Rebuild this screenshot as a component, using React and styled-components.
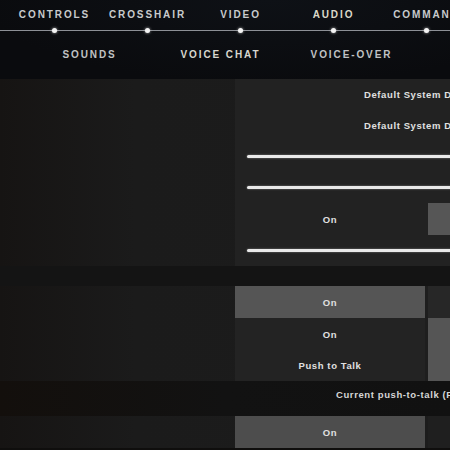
import React from "react";
import styled, { createGlobalStyle } from "styled-components";

const Global = createGlobalStyle`
  html, body { margin: 0; padding: 0; }
  body {
    background: #0c0e12;
    font-family: "Liberation Sans", Arial, sans-serif;
    overflow: hidden;
  }
`;

const Screen = styled.div`
  width: 450px;
  height: 450px;
  overflow: hidden;
  display: flex;
  flex-direction: column;
  background: #0f0e0d;
`;

/* ---------- header tabs ---------- */
const Header = styled.header`
  height: 79px;
  flex: none;
  background: radial-gradient(ellipse at 60% 0%, #0e1116 0%, #0a0b0e 75%);
  display: flex;
  flex-direction: column;
`;

const TabRow = styled.nav`
  position: relative;
  display: flex;
  padding-left: 8px;
  height: 40px;
  &::after {
    content: "";
    position: absolute;
    left: 0;
    right: 0;
    top: 30px;
    height: 1px;
    background: #8d9096;
  }
`;

const Tab = styled.div`
  position: relative;
  flex: none;
  width: 93px;
  display: flex;
  justify-content: center;
  white-space: nowrap;
  padding-top: 10px;
  font-size: 10px;
  font-weight: 700;
  letter-spacing: 1.9px;
  line-height: 10px;
  color: ${(p) => (p.$active ? "#dbd8c8" : "#c8cacc")};
  &::after {
    content: "";
    position: absolute;
    z-index: 1;
    left: 50%;
    top: 28px;
    width: 5px;
    height: 5px;
    margin-left: -2.5px;
    border-radius: 50%;
    background: #f4f4f4;
    box-shadow: 0 0 3px rgba(255, 255, 255, 0.7);
  }
`;

const SubRow = styled.nav`
  display: flex;
  padding-left: 24px;
  padding-top: 10px;
`;

const SubTab = styled.div`
  flex: none;
  width: 131px;
  text-align: center;
  white-space: nowrap;
  font-size: 10px;
  font-weight: 700;
  letter-spacing: 1.9px;
  line-height: 10px;
  color: ${(p) => (p.$active ? "#d8d7ce" : "#c0c2c4")};
`;

/* ---------- settings body ---------- */
const Section = styled.section`
  flex: none;
  display: grid;
  grid-template-columns: 235px 1fr;
  background: linear-gradient(90deg, #161413 0%, #1b1b1b 30%, #1c1c1c 100%);
`;

const LeftPad = styled.div``;

const Panel = styled.div`
  display: flex;
  flex-direction: column;
  background: ${(p) => p.$bg || "transparent"};
`;

const Row = styled.div`
  height: ${(p) => p.$h || 31}px;
  flex: none;
  display: flex;
  align-items: center;
  overflow: hidden;
`;

const Label = styled.span`
  font-size: 9.5px;
  font-weight: 700;
  letter-spacing: 0.6px;
  color: #e0e0e0;
  white-space: nowrap;
`;

const DropText = styled(Label)`
  padding-left: 129px;
`;

const Track = styled.div`
  position: relative;
  margin-left: 12px;
  flex: 1;
  height: 3px;
  border-radius: 2px 0 0 2px;
  background: #e9e9e9;
  box-shadow: 0 0 2px rgba(255, 255, 255, 0.45);
`;

const Knob = styled.span`
  position: absolute;
  top: 50%;
  width: 7px;
  height: 7px;
  margin: -3.5px 0 0 -3.5px;
  border-radius: 50%;
  background: #fafafa;
  box-shadow: 0 0 3px rgba(255, 255, 255, 0.8);
`;

const Choice = styled.div`
  flex: none;
  width: ${(p) => p.$w || 190}px;
  height: 100%;
  display: flex;
  align-items: center;
  justify-content: center;
  background: ${(p) => p.$bg || "transparent"};
`;

const ChoiceGap = styled.div`
  flex: none;
  width: 3px;
  height: 100%;
  background: ${(p) => p.$bg || "transparent"};
`;

const Band = styled.div`
  flex: none;
  height: ${(p) => p.$h}px;
  background: ${(p) => p.$bg};
  display: flex;
  align-items: flex-start;
`;

const InfoText = styled(Label)`
  padding-left: 336px;
  padding-top: 8px;
  color: #d6d6d6;
`;

const Slider = ({ value }) => (
  <Row>
    <Track>{value != null && <Knob style={{ left: `${value}%` }} />}</Track>
  </Row>
);

const ToggleRow = ({ h, on, off, label = "On", panel }) => (
  <Row $h={h}>
    <Choice $bg={on}>
      <Label>{label}</Label>
    </Choice>
    <ChoiceGap $bg={panel} />
    <Choice $bg={off} />
  </Row>
);

export default function App() {
  const tabs = ["CONTROLS", "CROSSHAIR", "VIDEO", "AUDIO", "COMMAND"];
  const subs = ["SOUNDS", "VOICE CHAT", "VOICE-OVER"];
  return (
    <Screen>
      <Global />
      <Header>
        <TabRow>
          {tabs.map((t) => (
            <Tab key={t} $active={t === "AUDIO"}>
              {t}
            </Tab>
          ))}
        </TabRow>
        <SubRow>
          {subs.map((s) => (
            <SubTab key={s} $active={s === "VOICE CHAT"}>
              {s}
            </SubTab>
          ))}
        </SubRow>
      </Header>

      <Section>
        <LeftPad />
        <Panel $bg="#222222">
          <Row>
            <DropText>Default System Device</DropText>
          </Row>
          <Row>
            <DropText>Default System Device</DropText>
          </Row>
          <Slider />
          <Slider />
          <Row $h={32}>
            <Choice>
              <Label>On</Label>
            </Choice>
            <ChoiceGap />
            <Choice $bg="#565656" />
          </Row>
          <Slider value={76} />
        </Panel>
      </Section>

      <Band $h={20} $bg="#141414" />

      <Section>
        <LeftPad />
        <Panel>
          <ToggleRow h={32} on="#555555" off="#272727" panel="#1e1e1e" />
          <ToggleRow h={32} on="#232323" off="#555555" panel="#1e1e1e" />
          <ToggleRow h={31} on="#232323" off="#555555" panel="#1e1e1e" label="Push to Talk" />
        </Panel>
      </Section>

      <Band $h={35} $bg="linear-gradient(90deg, #130f0c 0%, #121212 50%, #111111 100%)">
        <InfoText>Current push-to-talk (F) key: V</InfoText>
      </Band>

      <Section>
        <LeftPad />
        <Panel>
          <ToggleRow h={32} on="#4d4d4d" off="#1f1f1f" panel="#1c1c1c" />
        </Panel>
      </Section>
    </Screen>
  );
}
